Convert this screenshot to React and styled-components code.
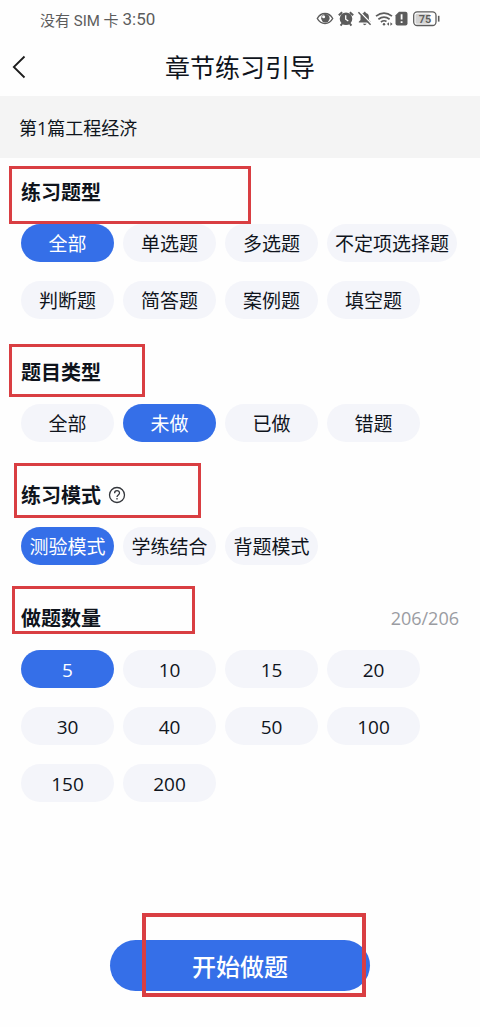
import React, {useState} from 'react';
import styled, {createGlobalStyle} from 'styled-components';

const sections = [
    {
        id: 'questionType',
        title: '练习题型',
        options: ['全部', '单选题', '多选题', '不定项选择题', '判断题', '简答题', '案例题', '填空题'],
        initial: '全部',
        mark: {top: -11, left: -12, width: 242, height: 58},
    },
    {
        id: 'doneState',
        title: '题目类型',
        options: ['全部', '未做', '已做', '错题'],
        initial: '未做',
        mark: {top: -13, left: -12, width: 136, height: 53},
    },
    {
        id: 'mode',
        title: '练习模式',
        help: true,
        options: ['测验模式', '学练结合', '背题模式'],
        initial: '测验模式',
        mark: {top: -17, left: -7, width: 187, height: 55},
    },
    {
        id: 'amount',
        title: '做题数量',
        count: '206/206',
        options: ['5', '10', '15', '20', '30', '40', '50', '100', '150', '200'],
        initial: '5',
        mark: {top: -17, left: -9, width: 183, height: 48},
    },
];

const StatusIcons = () => (
    <svg width="124" height="20" viewBox="0 0 124 20" fill="none" stroke="#5c5c5c" strokeWidth="1.5" aria-hidden="true">
        {/* eye */}
        <path d="M1.3 9.5C5 2.8 13 2.8 16.7 9.5C13 16.2 5 16.2 1.3 9.5Z" strokeWidth="1.4"/>
        <circle cx="9.4" cy="9.3" r="4.2" fill="#5c5c5c" stroke="none"/>
        <circle cx="7.6" cy="7.7" r="1.5" fill="#fff" stroke="none"/>
        {/* alarm */}
        <circle cx="30" cy="9.8" r="6.3" fill="#5c5c5c" stroke="none"/>
        <path d="M22.8 6.2L26.2 3.2M37.2 6.2L33.8 3.2M26.2 14.5L24.6 16.6M33.8 14.5L35.4 16.6" strokeWidth="2"/>
        <path d="M29.7 6.3V10.2L32.3 12" stroke="#fff" strokeWidth="1.3"/>
        {/* muted bell */}
        <path d="M42.8 13.6V12.8L44.5 11V8C44.5 5.6 45.8 4.4 47.6 3.9C47.6 2.3 49.8 2.3 49.8 3.9C51.8 4.4 52.9 5.6 52.9 8V11L54.6 12.8V13.6Z" fill="#5c5c5c" stroke="none"/>
        <path d="M46.8 14.8H50.6Q48.7 17.6 46.8 14.8Z" fill="#5c5c5c" stroke="none"/>
        <path d="M43.7 2.7L55.5 14.7" stroke="#fff"/>
        <path d="M42.4 3.3L54.6 15.7"/>
        {/* wifi */}
        <path d="M60 7.2Q68 1 76 7.2M62.4 10.2Q68 6 73.6 10.2M64.9 13Q68 10.8 70.5 12.5" strokeWidth="1.7"/>
        <circle cx="68" cy="15.3" r="1.2" fill="#5c5c5c" stroke="none"/>
        <path d="M70.8 15L73 13.2V16.8ZM76.6 15L74.4 13.2V16.8Z" fill="#5c5c5c" stroke="none"/>
        {/* sim card */}
        <path d="M83 2.7H89.5Q91.5 2.7 91.5 4.7V14.6Q91.5 16.6 89.5 16.6H81.5Q79.5 16.6 79.5 14.6V6.2Z" fill="#5c5c5c" stroke="none"/>
        <path d="M85.6 5.2V10.6M85.6 12.2V14.1" stroke="#fff" strokeWidth="1.8"/>
        {/* battery */}
        <rect x="97.7" y="2.9" width="22.3" height="13.6" rx="3.5" strokeWidth="1.3"/>
        <rect x="99.5" y="4.7" width="14.5" height="10" rx="1.5" fill="#d2d2d2" stroke="none"/>
        <path d="M122.7 6.8V12.6" strokeWidth="1.6"/>
        <text x="109" y="14" fontSize="11" fontWeight="600" textAnchor="middle" fill="#5c5c5c" stroke="none">75</text>
    </svg>
);

const HelpIcon = () => (
    <svg width="18" height="18" viewBox="0 0 18 18" fill="none" stroke="#33363b" strokeWidth="1.3" aria-hidden="true">
        <circle cx="9" cy="9" r="7.5"/>
        <path d="M6.6 7.2C6.6 3.9 11.5 3.9 11.5 7.1C11.5 9 9 9 9 11"/>
        <path d="M9 12V13.4"/>
    </svg>
);

const App = () => {
    const [selected, setSelected] = useState(
        Object.fromEntries(sections.map(({id, initial}) => [id, initial]))
    );

    return (
        <Page>
            <GlobalStyle/>
            <StatusBar>
                <Carrier>没有 SIM 卡</Carrier>
                <Clock>3:50</Clock>
                <StatusIcons/>
            </StatusBar>

            <Header>
                <BackButton type="button" aria-label="返回">
                    <svg width="14" height="24" viewBox="0 0 14 24" fill="none" stroke="#1c1c1c" strokeWidth="1.8">
                        <path d="M12.5 1.5L1.8 12L12.5 22.5"/>
                    </svg>
                </BackButton>
                <Title>章节练习引导</Title>
            </Header>

            <Chapter>第1篇工程经济</Chapter>

            <Content>
                {sections.map(({id, title, help, count, options, mark}) => (
                    <section key={id} aria-labelledby={id}>
                        <SectionHead>
                            <SectionTitle id={id}>{title}</SectionTitle>
                            {help && <HelpButton type="button" aria-label="说明"><HelpIcon/></HelpButton>}
                            {count && <Count>{count}</Count>}
                            <Mark {...toMark(mark)}/>
                        </SectionHead>
                        <Options>
                            {options.map(option => (
                                <Option
                                    key={option}
                                    type="button"
                                    $active={selected[id] === option}
                                    aria-pressed={selected[id] === option}
                                    onClick={() => setSelected({...selected, [id]: option})}
                                >
                                    {option}
                                </Option>
                            ))}
                        </Options>
                    </section>
                ))}
            </Content>

            <Footer>
                <StartWrap>
                    <StartButton type="button">开始做题</StartButton>
                    <Mark {...toMark({top: -27, left: 32, width: 224, height: 84, line: 4})}/>
                </StartWrap>
            </Footer>
        </Page>
    );
};

const toMark = ({top, left, width, height, line = 3}) => ({
    $top: top, $left: left, $width: width, $height: height, $line: line,
});

export default App;


const GlobalStyle = createGlobalStyle`
* {
    box-sizing: border-box;
}
body {
    margin: 0;
    background: #fefefe;
}
body, button {
    font-family: "Open Sans", "Noto Sans CJK SC", sans-serif;
}
button {
    margin: 0;
    padding: 0;
    border: 0;
    background: none;
    cursor: pointer;
}
`;

const Page = styled.div`
display: flex;
flex-direction: column;
min-height: 100vh;
color: #0f141c;
`;

const StatusBar = styled.div`
display: flex;
align-items: center;
height: 38px;
padding: 0 40px;
color: #5c5c5c;
font-family: Roboto, "Noto Sans CJK SC", sans-serif;

svg {
    margin-left: auto;
}
`;

const Carrier = styled.span`
font-size: 15px;
`;

const Clock = styled.span`
margin-left: 4px;
font-size: 17px;
`;

const Header = styled.header`
display: grid;
grid-template-columns: 40px 1fr 40px;
align-items: center;
height: 58px;
`;

const BackButton = styled.button`
display: flex;
padding-left: 12px;
`;

const Title = styled.h1`
margin: 0;
font-size: 25px;
font-weight: 400;
line-height: 36px;
text-align: center;
`;

const Chapter = styled.div`
padding: 2px 19px 0;
background: #f4f4f4;
font-size: 18px;
line-height: 60px;
`;

const Content = styled.main`
display: flex;
flex-direction: column;
gap: 38px;
padding: 19px 21px 38px;
`;

const SectionHead = styled.div`
position: relative;
display: flex;
align-items: center;
height: 30px;
margin-bottom: 17px;
`;

const SectionTitle = styled.h2`
margin: 0;
padding-top: 2px;
font-size: 20px;
font-weight: 700;
line-height: 28px;
`;

const HelpButton = styled.button`
display: flex;
margin-left: 7px;
`;

const Count = styled.span`
margin-left: auto;
color: #9a9ca2;
font-size: 18px;
`;

// red frame drawn over the part being pointed out
const Mark = styled.span`
position: absolute;
top: ${p => p.$top}px;
left: ${p => p.$left}px;
width: ${p => p.$width}px;
height: ${p => p.$height}px;
border: ${p => p.$line}px solid #d93e42;
pointer-events: none;
`;

const Options = styled.div`
display: flex;
flex-wrap: wrap;
gap: 19px 9px;
`;

const Option = styled.button`
min-width: 93px;
height: 38px;
padding: 2px 8px 0;
border-radius: 19px;
background: ${p => p.$active ? '#356fe8' : '#f4f5fa'};
color: ${p => p.$active ? '#fff' : '#0f141c'};
font-size: 19px;
line-height: 36px;
`;

const Footer = styled.footer`
display: flex;
justify-content: center;
margin-top: auto;
padding-bottom: 36px;
`;

const StartWrap = styled.div`
position: relative;
`;

const StartButton = styled.button`
width: 260px;
height: 51px;
border-radius: 26px;
background: #356fe8;
color: #fff;
font-size: 24px;
font-weight: 500;
`;
